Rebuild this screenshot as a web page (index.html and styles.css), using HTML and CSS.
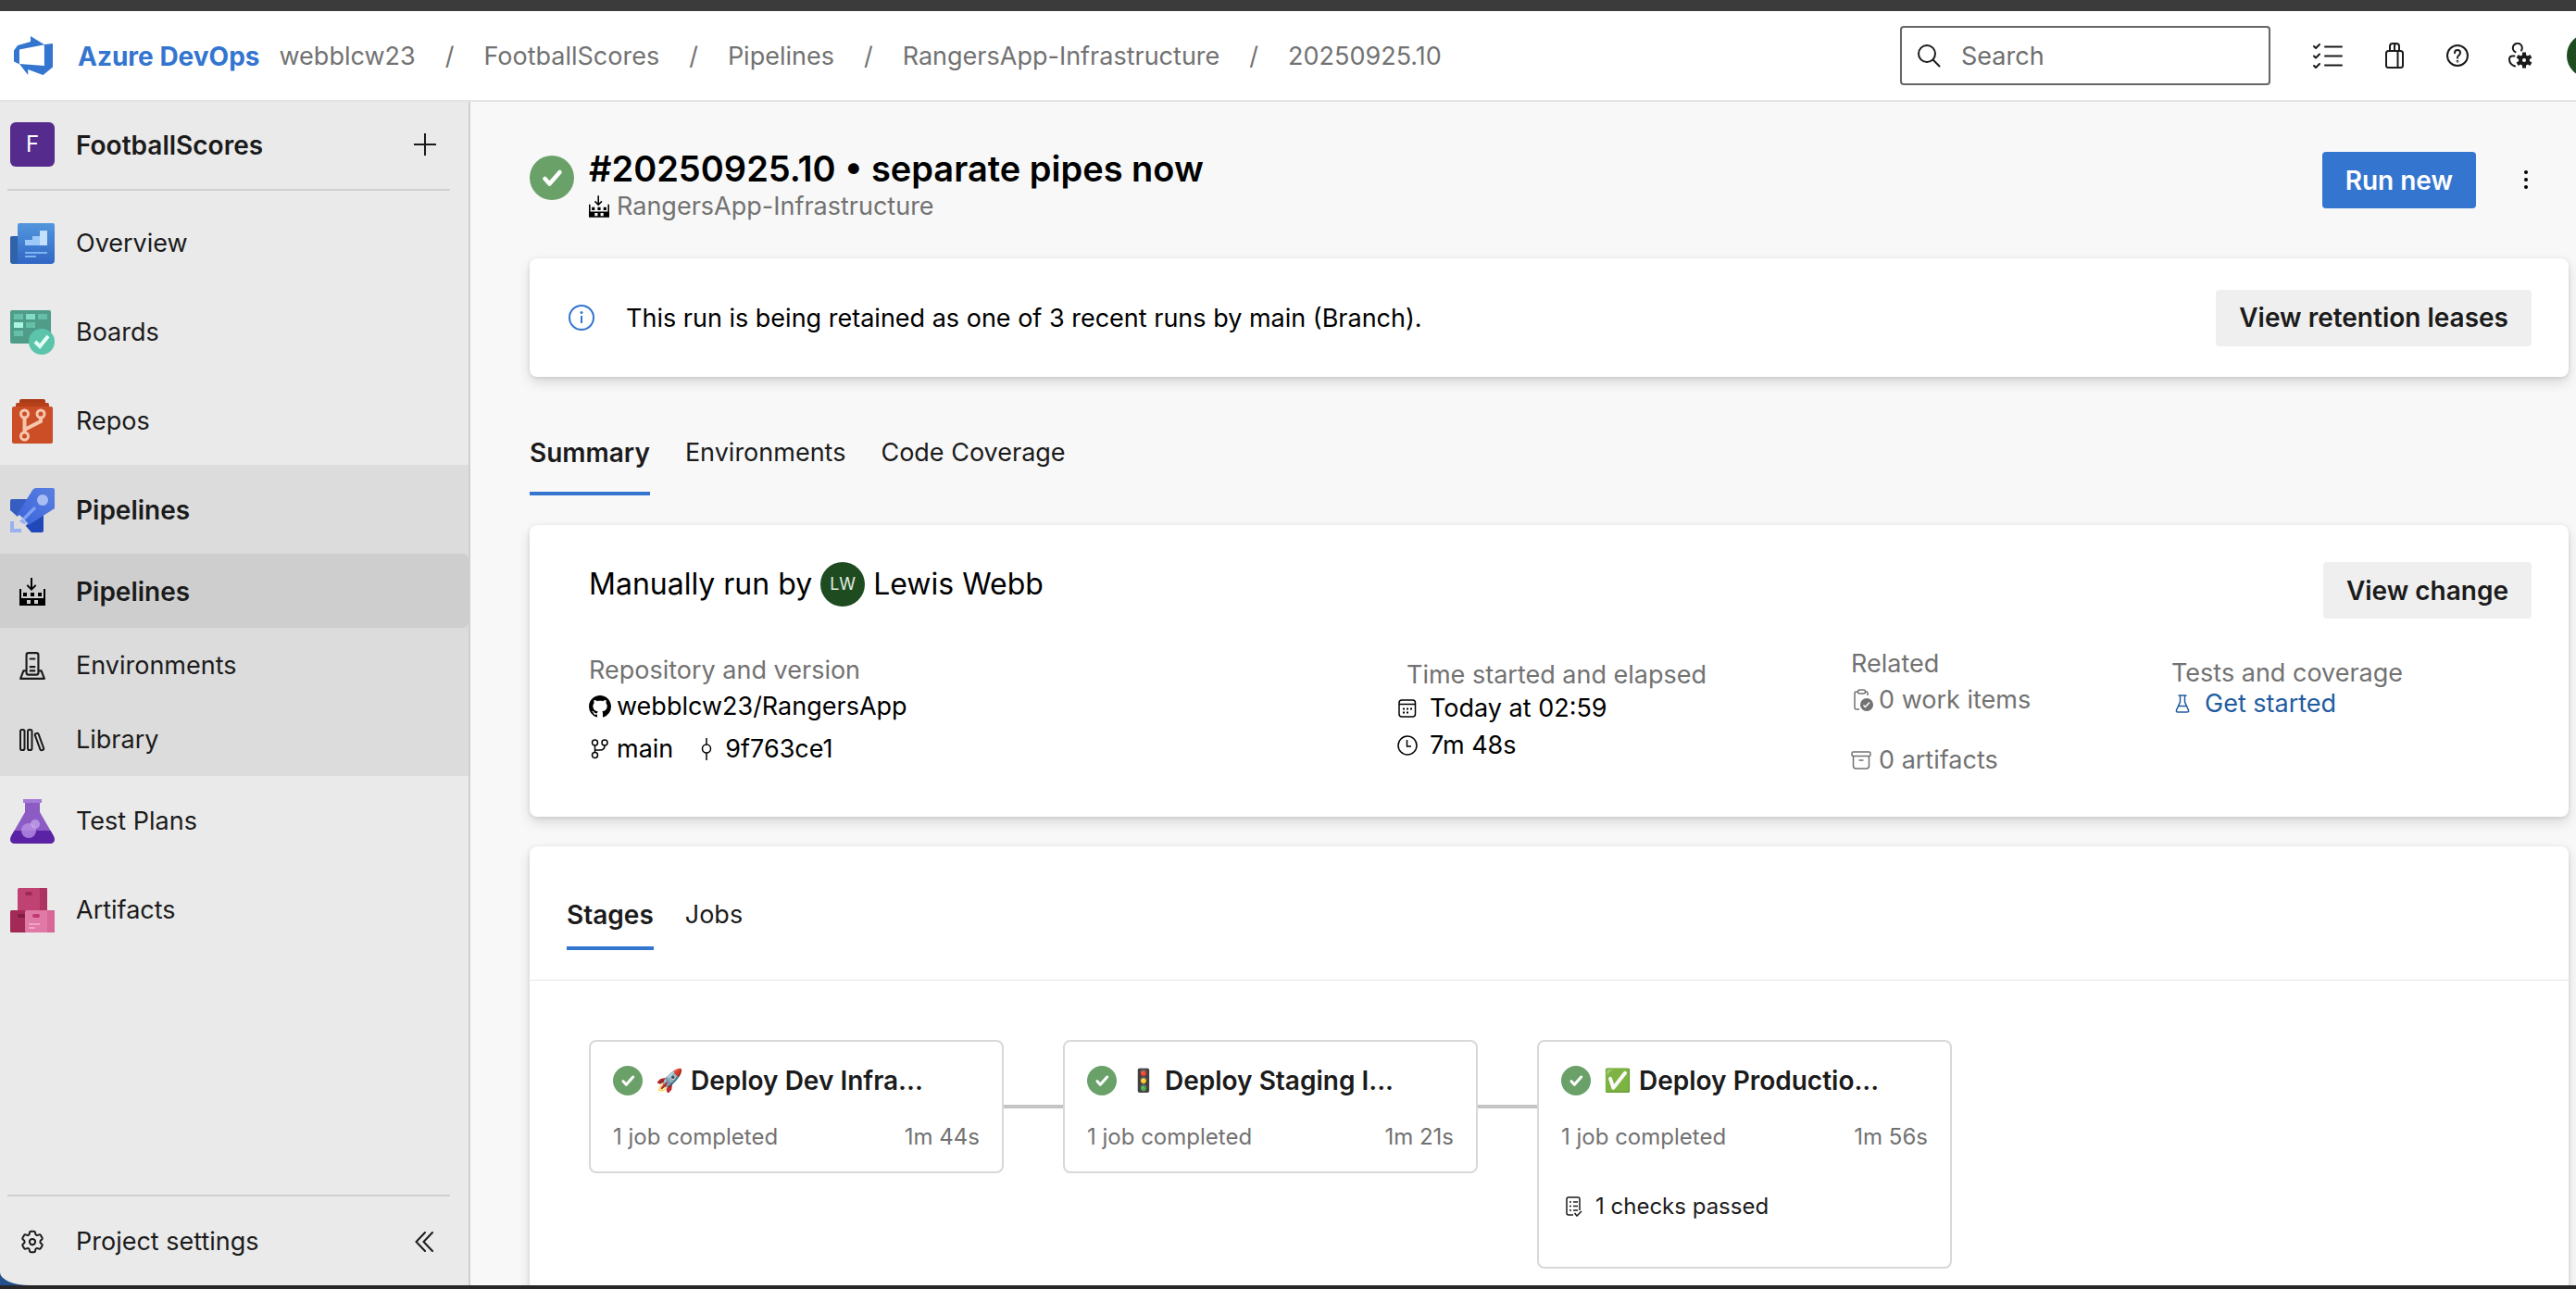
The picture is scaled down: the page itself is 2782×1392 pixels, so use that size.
FILE: index.html
```html
<!DOCTYPE html>
<html lang="en">
<head>
<meta charset="utf-8">
<title>Pipelines - Run 20250925.10</title>
<link rel="stylesheet" href="styles.css">
</head>
<body>
<svg class="sprite" aria-hidden="true">
  <symbol id="i-pipeline" viewBox="0 0 28 30">
    <path d="M12 0h2v10.200l3-3 1.400 1.400L13 14 7.600 8.600 9 7.200l3 3z"/>
    <path fill-rule="evenodd" d="M0 12h2v10h24V12h2v18H0zM8 24v4h4v-4zM16 24v4h4v-4z"/>
    <path d="M4 16h4v4H4zM12 16h4v4h-4zM20 16h4v4h-4z"/>
  </symbol>
  <symbol id="i-check" viewBox="0 0 48 48">
    <circle cx="24" cy="24" r="24" fill="#6aa169"/>
    <path d="M16.500 25l5 5.500 11-12.500" fill="none" stroke="#fff" stroke-width="4.500" stroke-linecap="round" stroke-linejoin="round"/>
  </symbol>
</svg>
<div class="window">
  <header class="topbar">
    <a class="brand" href="#">
      <svg width="42" height="42" viewBox="1 1 16 16" aria-hidden="true"><path fill="#3375cf" d="M17 4v9.740l-4 3.280-6.200-2.260V17l-3.510-4.590 10.230.8V4.440zm-3.410.49L7.850 1v2.290L2.580 4.840 1 6.870v4.610l2.260 1V6.570z"/></svg>
      <span>Azure DevOps</span>
    </a>
    <nav class="crumbs" aria-label="Breadcrumb">
      <a href="#">webblcw23</a><i>/</i><a href="#">FootballScores</a><i>/</i><a href="#">Pipelines</a><i>/</i><a href="#">RangersApp-Infrastructure</a><i>/</i><a href="#">20250925.10</a>
    </nav>
    <label class="search">
      <svg width="26" height="26" viewBox="0 0 26 26" fill="none" stroke="#1b1b1b" stroke-width="2" stroke-linecap="round" aria-hidden="true"><circle cx="11" cy="11" r="9"/><path d="M17.500 17.500L24.500 24.500"/></svg>
      <input type="search" placeholder="Search" aria-label="Search">
    </label>
    <button class="tool wide" aria-label="Work items"><svg width="32" height="28" viewBox="0 0 32 28" fill="none" stroke="#1b1b1b" stroke-width="2" stroke-linecap="round" stroke-linejoin="round"><path d="M1 4l2 2 4-4M1 14.500l2 2 4-4M1 25l2 2 4-4M13 4.500h18M13 14.500h18M13 24.500h18"/></svg></button>
    <button class="tool" aria-label="Marketplace"><svg width="20" height="28" viewBox="0 0 20 28" fill="none" stroke="#1b1b1b" stroke-width="2" stroke-linejoin="round"><rect x="1" y="9" width="18" height="18" rx="2.500"/><path d="M13.500 9v18M5 9V4q0-3 3-3h4q3 0 3 3v5M10 9V4q0-3 2-3"/></svg></button>
    <button class="tool" aria-label="Help"><svg width="24" height="24" viewBox="0 0 24 24" fill="none" stroke="#1b1b1b" stroke-width="2" stroke-linecap="round"><circle cx="12" cy="12" r="11"/><path d="M9 9.300q0-3.300 3-3.300t3 3q0 1.600-1.600 2.800T12 14.600"/><circle cx="12" cy="18.200" r=".4"/></svg></button>
    <button class="tool" aria-label="User settings"><svg width="26" height="28" viewBox="0 0 26 28" fill="none" stroke="#1b1b1b" stroke-width="2"><path stroke-linecap="round" d="M7.500 10.200A5 5 0 1 1 14 8.500M6.500 14.500H4.500Q1 14.500 1 18q0 5.500 6 7.500"/><path d="M17 10.500v17M9.600 14.800l14.800 8.500M9.600 23.300l14.800-8.500" stroke-width="4"/><circle cx="17" cy="19" r="4" stroke-width="4"/><circle cx="17" cy="19" r="2" fill="#fff" stroke="none"/></svg></button>
    <a class="me" href="#" aria-label="Account"></a>
  </header>

  <div class="body">
    <aside class="sidebar">
      <div class="project">
        <span class="badge">F</span><a href="#">FootballScores</a>
        <button aria-label="Add"><svg width="24" height="24" viewBox="0 0 24 24" stroke="#1b1b1b" stroke-width="2"><path d="M12 0v24M0 12h24"/></svg></button>
      </div>
      <nav class="menu" aria-label="Project">
        <a href="#"><svg viewBox="0 0 48 48"><defs><linearGradient id="g1" x2="0" y2="1"><stop stop-color="#5296dd"/><stop offset="1" stop-color="#3166c4"/></linearGradient></defs><path d="M0 18q0-2 2-2h8v30H3q-3 0-3-3z" fill="#2f62a8"/><path d="M8 4q0-2 2-2h36q2 0 2 2v38q0 4-4 4H4q4 0 4-4z" fill="url(#g1)"/><path d="M16 20h8v-4h8v-6h8v16H16z" fill="#9cc9f7"/><path d="M32 10h8v16h-8z" fill="#c4e0fd"/><path d="M16 33h24v2H16zM16 37h12v2H16z" fill="#7db3ef"/></svg>Overview</a>
        <a href="#"><svg viewBox="0 0 48 48"><rect width="44" height="36" rx="2" fill="#4f9d89"/><path d="M4 4h10v6H4zM30 4h10v6H30zM17 13h10v6H17zM4 22h10v6H4z" fill="#66bfaa"/><path d="M17 4h10v6H17z" fill="#83dcc8"/><path d="M4 13h10v6H4z" fill="#a9f7e2"/><circle cx="34" cy="34" r="14" fill="#5cc4aa"/><path d="M27 34l5 5 9-11" fill="none" stroke="#e3fff8" stroke-width="4"/></svg>Boards</a>
        <a href="#"><svg viewBox="0 0 48 48"><rect x="10" width="28" height="12" rx="2" fill="#ac3c18"/><rect x="6" y="4" width="36" height="12" rx="2" fill="#b6411b"/><rect x="2" y="8" width="44" height="40" rx="2" fill="#cb4e27"/><g fill="none" stroke="#f7c6ae" stroke-width="3"><path d="M15.500 20v16M33 20v4L15.500 33" stroke-width="4"/><circle cx="15.500" cy="16" r="4"/><circle cx="33" cy="16" r="4"/><circle cx="15.500" cy="40" r="4"/></g></svg>Repos</a>
        <div class="group">
          <a class="on" href="#"><svg viewBox="0 0 48 48"><defs><linearGradient id="g2" x1="1" x2="0" y2="1"><stop stop-color="#5a80df"/><stop offset="1" stop-color="#3a63dc"/></linearGradient></defs><path d="M0 14q0-2 2-2h18L8 31 0 24z" fill="#365dc0"/><path d="M36 28v18q0 2-2 2H23l-7-8z" fill="#2148b8"/><path d="M28 0h18q2 0 2 2v20L20 40 8 28 23 4q2-4 5-4z" fill="url(#g2)"/><circle cx="35" cy="13" r="6" fill="#a8bdf3"/><path d="M12 36l15-15" stroke="#7f9ff0" stroke-width="3.500"/><path d="M8 31l2-2 9 9-2 3z" fill="#dcdcdc"/><path d="M10 36l3-3 5 5-3 1z" fill="#93adf3"/><path d="M0 36h4v8h8v4H0z" fill="#9ab1ef"/></svg>Pipelines</a>
          <a class="sub current" href="#" aria-current="page"><svg width="28" height="30"><use href="#i-pipeline"/></svg>Pipelines</a>
          <a class="sub" href="#"><svg width="26" height="28" viewBox="0 0 26 28" fill="none" stroke="#1b1b1b" stroke-width="2" stroke-linejoin="round"><rect x="7" y="1" width="12" height="22" rx="2"/><path d="M10 7h6M10 15h6M10 19h6M7 19H4L1 27h24l-3-8h-3"/></svg>Environments</a>
          <a class="sub" href="#"><svg width="28" height="24" viewBox="0 0 28 24" fill="none" stroke="#1b1b1b" stroke-width="2"><rect x="1" y="1" width="4.500" height="22" rx="1.800"/><rect x="9" y="1" width="4.500" height="22" rx="1.800"/><rect x="19.500" y="4.500" width="4" height="19" rx="1.500" transform="rotate(-20 21.500 14)"/></svg>Library</a>
        </div>
        <a href="#"><svg viewBox="0 0 48 48"><path d="M16 2h16v12l15 26q3 8-5 8H6q-8 0-5-8l15-26z" fill="#8c5cc4"/><path d="M4.500 34h39L47 40q3 8-5 8H6q-8 0-5-8z" fill="#5a22a4"/><path d="M14 0h20v4H14z" fill="#a57bd8"/><circle cx="20" cy="34" r="8" fill="#b890e4" fill-opacity=".8"/><circle cx="27" cy="27" r="5" fill="#cbaaf0" fill-opacity=".7"/></svg>Test Plans</a>
        <a href="#"><svg viewBox="0 0 48 48"><rect x="8" width="32" height="26" rx="1.500" fill="#bf4272"/><path d="M32 0h7q1 0 1 1v24h-8z" fill="#ac3362"/><rect y="24" width="18" height="24" rx="1.500" fill="#a32a57"/><rect x="16" y="24" width="32" height="24" rx="1.500" fill="#e079a5"/><path d="M40 24h7q1 0 1 1v22q0 1-1 1h-7z" fill="#d76797"/><rect x="16" y="4" width="8" height="4" rx="2" fill="#9c2a56"/><rect x="8" y="28" width="8" height="4" rx="2" fill="#7d1c40"/><rect x="24" y="28" width="8" height="4" rx="2" fill="#bf3a70"/><path d="M20 38h12v2H20zM20 42h7v2h-7z" fill="#f0a3c4"/></svg>Artifacts</a>
      </nav>
      <div class="settings">
        <a href="#"><svg width="30" height="30" viewBox="0 0 24 24" fill="none" stroke="#1b1b1b" stroke-width="1.600"><path d="M9.594 3.940c.09-.542.56-.94 1.110-.94h2.593c.55 0 1.020.398 1.110.94l.213 1.281c.063.374.313.686.645.87.074.04.147.083.22.127.325.196.72.257 1.075.124l1.217-.456a1.125 1.125 0 0 1 1.370.49l1.296 2.247a1.125 1.125 0 0 1-.26 1.431l-1.003.827c-.293.241-.438.613-.43.992a7.723 7.723 0 0 1 0 .255c-.008.378.137.75.43.991l1.004.827c.424.35.534.955.26 1.430l-1.298 2.247a1.125 1.125 0 0 1-1.369.491l-1.217-.456c-.355-.133-.75-.072-1.076.124a6.470 6.470 0 0 1-.22.128c-.331.183-.581.495-.644.869l-.213 1.281c-.09.543-.56.94-1.110.94h-2.594c-.55 0-1.019-.398-1.110-.94l-.213-1.281c-.062-.374-.312-.686-.644-.87a6.520 6.520 0 0 1-.22-.127c-.325-.196-.72-.257-1.076-.124l-1.217.456a1.125 1.125 0 0 1-1.369-.49l-1.297-2.247a1.125 1.125 0 0 1 .26-1.431l1.004-.827c.292-.24.437-.613.43-.991a6.932 6.932 0 0 1 0-.255c.007-.38-.138-.751-.43-.992l-1.004-.827a1.125 1.125 0 0 1-.26-1.430l1.297-2.247a1.125 1.125 0 0 1 1.370-.491l1.216.456c.356.133.751.072 1.076-.124.072-.044.146-.086.22-.128.332-.183.582-.495.644-.869l.214-1.280Z"/><circle cx="12" cy="12" r="2.500"/></svg>Project settings</a>
        <button aria-label="Collapse"><svg width="20" height="22" viewBox="0 0 20 22" fill="none" stroke="#1b1b1b" stroke-width="2" stroke-linecap="round"><path d="M11 1L1.500 11 11 21M19 1L9.500 11 19 21"/></svg></button>
      </div>
    </aside>

    <main>
      <div class="run">
        <svg class="status" width="48" height="48" role="img" aria-label="Succeeded"><use href="#i-check"/></svg>
        <div class="run-title">
          <h1>#20250925.10 • separate pipes now</h1>
          <a href="#"><svg width="22" height="24"><use href="#i-pipeline"/></svg>RangersApp-Infrastructure</a>
        </div>
        <button class="btn primary">Run new</button>
        <button class="more" aria-label="More"><svg width="6" height="22" viewBox="0 0 6 22"><circle cx="3" cy="3" r="2"/><circle cx="3" cy="11" r="2"/><circle cx="3" cy="19" r="2"/></svg></button>
      </div>

      <section class="card alert">
        <svg width="28" height="28" viewBox="0 0 28 28" fill="none" stroke="#3375cf" stroke-width="2" aria-hidden="true"><circle cx="14" cy="14" r="13"/><path d="M14 12v8"/><circle cx="14" cy="8.500" r="1.500" fill="#3375cf" stroke="none"/></svg>
        <p>This run is being retained as one of 3 recent runs by main (Branch).</p>
        <button class="btn">View retention leases</button>
      </section>

      <nav class="tabs" aria-label="Run"><a class="active" href="#">Summary</a><a href="#">Environments</a><a href="#">Code Coverage</a></nav>

      <section class="card summary">
        <div class="by">
          <h2>Manually run by <span class="avatar">LW</span> Lewis Webb</h2>
          <button class="btn">View change</button>
        </div>
        <div class="facts">
          <div class="repo">
            <h3>Repository and version</h3>
            <div><svg width="24" height="24" viewBox="0 0 16 16"><path d="M8 0c4.420 0 8 3.580 8 8a8.013 8.013 0 0 1-5.450 7.590c-.4.080-.55-.17-.55-.38 0-.27.010-1.130.010-2.200 0-.75-.25-1.230-.54-1.480 1.780-.2 3.650-.88 3.650-3.950 0-.88-.31-1.590-.82-2.150.080-.2.360-1.020-.080-2.120 0 0-.67-.22-2.200.82-.64-.18-1.320-.27-2-.27-.68 0-1.360.090-2 .27-1.530-1.030-2.200-.82-2.200-.82-.44 1.100-.16 1.920-.080 2.120-.51.56-.82 1.280-.82 2.150 0 3.060 1.860 3.750 3.640 3.950-.23.2-.44.55-.51 1.070-.46.21-1.610.55-2.330-.66-.15-.24-.6-.83-1.230-.82-.67.010-.27.380.010.53.34.190.73.9.820 1.130.160.450.680 1.310 2.690.940 0 .67.010 1.300.010 1.490 0 .21-.15.450-.55.380A7.995 7.995 0 0 1 0 8c0-4.420 3.580-8 8-8Z"/></svg><a href="#">webblcw23/RangersApp</a></div>
            <div><svg width="24" height="24" viewBox="0 0 24 24" fill="none" stroke="#000" stroke-width="1.500"><circle cx="6.500" cy="5" r="3"/><circle cx="17" cy="5" r="3"/><circle cx="6.500" cy="18.500" r="3"/><path d="M6.500 8v7.500M17 8q0 5-5 5H6.500"/></svg><a href="#">main</a>
            <svg class="commit" width="12" height="24" viewBox="0 0 12 24" fill="none" stroke="#000" stroke-width="1.500"><circle cx="6" cy="11.500" r="4.500"/><path d="M6 0v7M6 16v8"/></svg><a href="#">9f763ce1</a></div>
          </div>
          <div class="time">
            <h3>Time started and elapsed</h3>
            <div><svg width="22" height="20" viewBox="0 0 22 20" fill="none" stroke="#000" stroke-width="1.500"><rect x="2" y="1" width="17.500" height="18" rx="3"/><path d="M2 5.500h17.500"/><path d="M6 10.500h2M10 10.500h2M14 10.500h2M6 14.500h2M10 14.500h2" stroke-width="2"/></svg>Today at 02:59</div>
            <div><svg width="22" height="22" viewBox="0 0 22 22" fill="none" stroke="#000" stroke-width="1.500"><circle cx="11" cy="11" r="10"/><path d="M10.500 5v7h4.500"/></svg>7m 48s</div>
          </div>
          <div class="related">
            <h3>Related</h3>
            <div><svg width="24" height="24" viewBox="0 0 24 24" fill="none" stroke="#727272" stroke-width="1.500"><path d="M9 22H6q-2 0-2-2V4.500Q4 3 6 3h2M15 3h1.500Q18 3 18 4.500V7"/><rect x="7.500" y="1" width="8" height="4" rx="2"/><circle cx="17" cy="17" r="7" fill="#727272" stroke="none"/><path d="M13.500 17.500l2 2 4.500-5" stroke="#fff"/></svg>0 work items</div>
            <div><svg width="24" height="20" viewBox="0 0 24 20" fill="none" stroke="#727272" stroke-width="1.500"><rect x="1" y="1" width="20" height="4.500" rx="1.500"/><path d="M2.500 5.500V16q0 3 3 3h11q3 0 3-3V5.500M8.500 10h5"/></svg>0 artifacts</div>
          </div>
          <div class="tests">
            <h3>Tests and coverage</h3>
            <div><svg width="24" height="20" viewBox="0 0 24 20" fill="none" stroke="#225b9f" stroke-width="1.500"><path d="M7.500 1h9M9.500 1v7L5.500 17q-.5 2 1.500 2h10q2 0 1.500-2L14.500 8V1M8 12.500h8"/></svg><a href="#">Get started</a></div>
          </div>
        </div>
      </section>

      <section class="card stages">
        <nav class="tabs" aria-label="Run details"><a class="active" href="#">Stages</a><a href="#">Jobs</a></nav>
        <div class="flow">
          <article class="stage">
            <h4><svg width="32" height="32"><use href="#i-check"/></svg><span class="emoji">🚀</span>Deploy Dev Infra...</h4>
            <p><span>1 job completed</span><span>1m 44s</span></p>
          </article>
          <span class="link"></span>
          <article class="stage">
            <h4><svg width="32" height="32"><use href="#i-check"/></svg><span class="emoji">🚦</span>Deploy Staging I...</h4>
            <p><span>1 job completed</span><span>1m 21s</span></p>
          </article>
          <span class="link"></span>
          <article class="stage">
            <h4><svg width="32" height="32"><use href="#i-check"/></svg><span class="emoji">✅</span>Deploy Productio...</h4>
            <p><span>1 job completed</span><span>1m 56s</span></p>
            <button class="checks"><svg width="20" height="22" viewBox="0 0 20 22" fill="none" stroke="#1b1b1b" stroke-width="1.500"><path d="M9 20H4q-2 0-2-2V3q0-2 2-2h10q2 0 2 2v12M5 6h2M9 6h5M5 10.500h2M9 10.500h5M5 15h2M9 15h5M10.500 18l2.500 3 5-5"/></svg>1 checks passed</button>
          </article>
        </div>
      </section>
    </main>
  </div>
</div>
</body>
</html>
```
FILE: styles.css
```css
* { box-sizing: border-box; }

body {
  margin: 0;
  background: #fff;
  color: #000;
  font: 27px/32px Inter, "Noto Sans", sans-serif;
}

h1, h2, h3, h4, p { margin: 0; font-weight: 400; font-size: inherit; }
a { color: inherit; text-decoration: none; }
svg { display: block; flex: none; }
.sprite { position: absolute; width: 0; height: 0; }

button {
  display: flex;
  align-items: center;
  justify-content: center;
  flex: none;
  margin: 0;
  padding: 0;
  border: 0;
  background: none;
  color: #1b1b1b;
  font: inherit;
}

.window {
  display: flex;
  flex-direction: column;
  height: 100vh;
  overflow: hidden;
  border-top: 12px solid #3b3b3b;
  border-bottom: 4px solid #282626;
}

/* Top bar */
.topbar {
  display: flex;
  align-items: center;
  flex: none;
  height: 98px;
  padding-left: 15px;
  border-bottom: 2px solid #e3e3e3;
  overflow: hidden;
}
.brand {
  display: flex;
  align-items: center;
  gap: 27px;
  margin-right: 21px;
  color: #3375cf;
  font-size: 28px;
  font-weight: 700;
}
.brand span, .crumbs { padding-top: 2px; }
.crumbs { display: flex; gap: 32px; color: #727272; white-space: nowrap; }
.crumbs i { font-style: normal; }
.search {
  display: flex;
  align-items: center;
  gap: 22px;
  width: 400px;
  height: 64px;
  margin: 0 34px 0 auto;
  padding: 0 16px;
  border: 2px solid #666;
  border-radius: 4px;
}
.search input {
  flex: 1;
  min-width: 0;
  padding: 2px 0 0;
  border: 0;
  outline: 0;
  background: none;
  font: inherit;
}
.search input::placeholder { color: #6e6e6e; opacity: 1; }
.tool { width: 48px; height: 48px; margin-right: 20px; }
.tool.wide { width: 56px; }
.me {
  flex: none;
  width: 48px;
  height: 48px;
  margin: 0 -38px 0 6px;
  border-radius: 50%;
  background: #1f4b20;
}

.body { display: flex; flex: 1; min-height: 0; background: radial-gradient(circle at 0 100%, #24508c 0 40px, #f8f8f8 40px); }

/* Sidebar */
.sidebar {
  display: flex;
  flex-direction: column;
  flex: none;
  width: 508px;
  border-right: 2px solid #cfcfcf;
  border-bottom-left-radius: 32px 14px;
  background: #eaeaea;
  color: #1b1b1b;
  overflow: hidden;
}
.project {
  display: flex;
  align-items: center;
  height: 96px;
  margin: 0 20px 8px 8px;
  padding: 0 15px 2px 3px;
  border-bottom: 2px solid #d0d0d0;
  font-size: 28px;
  font-weight: 600;
}
.project a { flex: 1; padding-top: 2px; }
.badge {
  width: 48px;
  height: 48px;
  margin-right: 23px;
  border-radius: 6px;
  background: #562b8e;
  color: #fff;
  font-size: 24px;
  font-weight: 400;
  line-height: 48px;
  text-align: center;
}
.menu { flex: 1; }
.menu a { display: flex; align-items: center; gap: 23px; height: 96px; padding: 2px 0 0 11px; }
.menu a > svg { width: 48px; height: 48px; }
.menu .group { background: #dcdcdc; }
.menu .on, .menu .current { font-size: 28px; font-weight: 600; }
.menu .sub { height: 80px; padding-left: 21px; gap: 0; }
.menu .sub > svg { width: 28px; height: 30px; margin-right: 33px; }
.menu .current { border-radius: 0 6px 6px 0; background: #cecece; }
.settings {
  display: flex;
  align-items: center;
  height: 98px;
  margin: 0 20px 0 8px;
  padding: 2px 18px 0 12px;
  border-top: 2px solid #d0d0d0;
}
.settings a { display: flex; flex: 1; align-items: center; gap: 32px; }

/* Main column */
main { flex: 1; min-width: 0; padding: 50px 8px 0 64px; background: #f8f8f8; overflow: hidden; }

.run { display: flex; align-items: flex-start; height: 80px; margin-bottom: 39px; padding-right: 22px; }
.status { margin: 8px 16px 0 0; }
.run-title { flex: 1; }
.run-title h1 { font-size: 38px; font-weight: 600; line-height: 44px; }
.run-title a { display: flex; align-items: center; gap: 8px; line-height: 38px; color: #727272; }
.run-title svg { fill: #000; }
.more { width: 48px; height: 60px; margin: 4px 0 0 30px; }

.btn {
  height: 61px;
  padding: 0 25px;
  border-radius: 4px;
  background: #efefef;
  font-size: 28px;
  font-weight: 600;
}
.btn.primary { margin-top: 4px; background: #3375cf; color: #fff; }

.card {
  border-radius: 8px;
  background: #fff;
  box-shadow: 0 6px 14px rgba(0, 0, 0, .13), 0 1px 4px rgba(0, 0, 0, .11);
}

.alert { display: flex; align-items: center; height: 128px; padding: 0 40px 0 42px; }
.alert p { flex: 1; margin-left: 34px; padding-top: 2px; }

.tabs { display: flex; gap: 38px; color: #1b1b1b; }
.tabs a { border-bottom: 4px solid transparent; line-height: 84px; }
.tabs .active { border-color: #3375cf; font-size: 28px; font-weight: 600; }
main > .tabs { margin: 40px 0 32px; }

.summary { padding: 40px 40px 38px 64px; }
.by { display: flex; justify-content: space-between; margin-bottom: 33px; }
.by h2 { display: flex; align-items: center; gap: 9px; height: 48px; font-size: 32px; }
.avatar {
  width: 48px;
  height: 48px;
  border-radius: 50%;
  background: #1f4b20;
  color: #e4ece4;
  font-size: 18px;
  line-height: 48px;
  text-align: center;
}
.facts { display: grid; grid-template-columns: 873fr 490fr 346fr 389fr; align-items: start; }
.facts h3 { color: #727272; }
.facts div > div { display: flex; align-items: center; height: 46px; }
.repo { padding-top: 7px; }
.repo svg { margin-right: 6px; }
.repo .commit { margin: 0 14px 0 30px; }
.time { padding-top: 12px; }
.time h3 { padding-left: 10px; }
.time div { gap: 13px; }
.facts .time > div { height: 40px; }
.facts .tests > div { height: 34px; }
.related { color: #727272; }
.related div { gap: 6px; }
.related div + div { margin-top: 19px; }
.tests { padding-top: 10px; }
.tests div { gap: 12px; color: #225b9f; }

.stages { margin-top: 32px; }
.stages .tabs { padding: 36px 40px 32px; border-bottom: 1px solid #e6e6e6; gap: 34px; }
.stages .tabs a { padding-top: 4px; line-height: 68px; }
.flow { display: flex; align-items: flex-start; padding: 64px; }
.link { flex: none; width: 64px; height: 4px; margin-top: 70px; background: #c4c4c4; }
.stage {
  flex: none;
  width: 448px;
  padding: 26px 24px 22px;
  border: 2px solid #d8d8d8;
  border-radius: 8px;
}
.stage h4 {
  display: flex;
  align-items: center;
  height: 32px;
  margin-bottom: 29px;
  color: #1b1b1b;
  font-size: 28px;
  font-weight: 600;
  white-space: nowrap;
}
.stage h4 + p { margin-bottom: -1px; }
.emoji { margin: 0 8px 0 14px; font-size: 24px; font-weight: 400; }
.stage p { display: flex; justify-content: space-between; color: #727272; font-size: 24px; }
.checks { margin-top: 44px; padding: 0 0 27px 4px; gap: 13px; font-size: 24px; }
```
